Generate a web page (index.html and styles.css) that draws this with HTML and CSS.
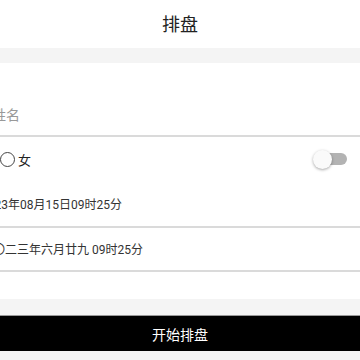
FILE: index.html
```html
<!DOCTYPE html>
<html lang="zh">
<head>
<meta charset="utf-8">
<link rel="stylesheet" href="styles.css">
</head>
<body>
<header class="topbar"><h1 class="title">排盘</h1></header>
<main class="content">
  <section class="card">
    <div class="row row-name"><span class="placeholder shift-name">姓名</span></div>
    <div class="row row-gender">
      <span class="radio"></span><span class="gender-label">女</span>
      <span class="spacer"></span>
      <span class="switch"><span class="track"></span><span class="knob"></span></span>
    </div>
    <div class="row row-date"><span class="value shift-date">2023年08月15日09时25分</span></div>
    <div class="row row-lunar"><span class="value shift-date">二〇二三年六月廿九 09时25分</span></div>
  </section>
  <button class="submit">开始排盘</button>
</main>
</body>
</html>
```
FILE: styles.css
```css
html, body {
  margin: 0;
  padding: 0;
}
body {
  width: 360px;
  height: 360px;
  overflow: hidden;
  background: #f4f4f4;
  font-family: Roboto, "Noto Sans CJK SC", sans-serif;
  color: #333;
}
.topbar {
  height: 48px;
  background: #fff;
  display: flex;
  align-items: center;
  justify-content: center;
}
.title {
  margin: 0;
  font-size: 18px;
  font-weight: 400;
  color: #222;
  line-height: 24px;
  padding-top: 1px;
}
.content {
  padding-top: 15px;
}
.card {
  background: #fff;
  height: 236px;
  overflow: hidden;
}
.row {
  display: flex;
  align-items: center;
  white-space: nowrap;
}
.row-name {
  padding-top: 42px;
  padding-bottom: 10px;
  border-bottom: 2px solid #dadada;
  line-height: 20px;
}
.placeholder {
  font-size: 14px;
  color: #999;
}
.shift-name {
  margin-left: -8px;
}
.row-gender {
  height: 44px;
  padding-right: 13px;
}
.radio {
  width: 13px;
  height: 13px;
  border: 1.5px solid #444;
  border-radius: 50%;
  margin-left: 0;
  box-sizing: content-box;
}
.gender-label {
  font-size: 13px;
  margin-left: 3px;
  color: #222;
}
.spacer {
  flex: 1;
}
.switch {
  display: flex;
  align-items: center;
  width: 34px;
  height: 20px;
}
.track {
  width: 20px;
  height: 12px;
  margin-left: 14px;
  background: #b3b3b3;
  border-radius: 0 6px 6px 0;
}
.knob {
  width: 19px;
  height: 19px;
  border-radius: 50%;
  background: #fafafa;
  box-shadow: 0 1px 3px rgba(0,0,0,0.35);
  margin-left: -34px;
}
.row-date {
  padding-top: 14px;
  padding-bottom: 11px;
  line-height: 20px;
  border-bottom: 2px solid #dadada;
}
.row-lunar {
  padding-top: 12px;
  padding-bottom: 10px;
  line-height: 20px;
  border-bottom: 2px solid #dadada;
}
.value {
  font-size: 12px;
  color: #333;
}
.shift-date {
  margin-left: -19px;
}
.submit {
  display: block;
  width: 100%;
  height: 36px;
  margin-top: 16px;
  border: 0;
  border-top: 1px solid #999;
  background: #000;
  color: #fff;
  font-family: Roboto, "Noto Sans CJK SC", sans-serif;
  font-size: 14px;
  padding: 0;
}
```
